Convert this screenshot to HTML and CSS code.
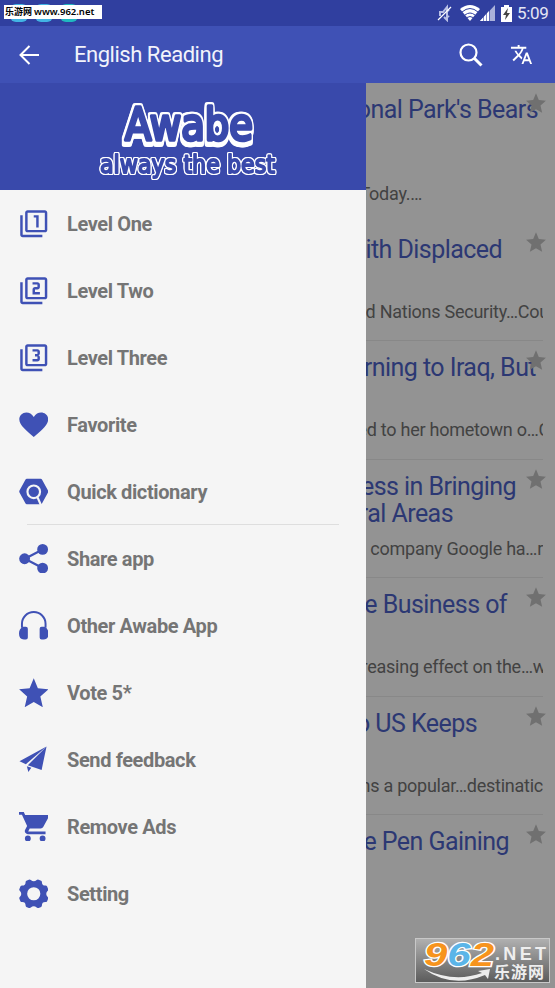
FILE: index.html
```
<!DOCTYPE html>
<html lang="en">
<head>
<meta charset="utf-8">
<title>English Reading</title>
<link rel="stylesheet" href="styles.css">
</head>
<body>
<svg width="0" height="0" class="defs">
  <defs>
    <symbol id="star" viewBox=".6 .8 22.800 21.900" preserveAspectRatio="none"><path d="M12 1l3.2 7.5 8.1.7-6.2 5.3 1.9 8L12 18.700 5 22.500l1.900-8L.7 9.200l8.100-.7z"/></symbol>
    <symbol id="stack" viewBox="0 0 24 24"><path d="M3 5H1v16c0 1.100.9 2 2 2h16v-2H3zM21 1H7c-1.100 0-2 .9-2 2v14c0 1.100.9 2 2 2h14c1.100 0 2-.9 2-2V3c0-1.100-.9-2-2-2zm0 16H7V3h14z"/></symbol>
  </defs>
</svg>
<div class="screen">
  <header class="status">
    <div class="notices"><i></i><i></i><i class="teal"></i></div>
    <span class="site-tag">乐游网 <span>www.962.net</span></span>
    <div class="system">
      <svg class="mute" viewBox="0 0 16 18"><path d="M3 12V8h3l4-5v13l-3-3M11 6l1 1M11 12l1 1" fill="none" stroke="#b9c0e6" stroke-width="2"/><path d="M1 16L14 3" stroke="#fff" stroke-width="1.300"/></svg>
      <svg class="wifi" viewBox="0 0 20 16"><path d="M0 4Q10-4 20 4L10 16z" fill="#fff"/><path d="M2 7Q10 0 18 7M5 10Q10 6 15 10M7 12.500Q10 10.500 13 12.500" fill="none" stroke="#303f9f" stroke-width="1"/></svg>
      <svg class="signal" viewBox="0 0 15 16"><path d="M0 16L15 0V16z" fill="#aab1da"/><path d="M0 16L9 6V16z" fill="#fff"/><path d="M3.500 11v5M6.500 8v8M9.500 5v11" stroke="#303f9f" stroke-width=".6"/></svg>
      <svg class="battery" viewBox="0 0 11 17"><path d="M3 0h5v2h3v15H0V2h3z" fill="#fff"/><path d="M7 3L2 10h3l-1 5 5-7H6z" fill="#454545"/></svg>
      <span class="clock">5:09</span>
    </div>
  </header>
  <nav class="appbar">
    <svg class="back" viewBox="0 0 20 20"><path d="M20 10H1.500M10.500 1L1.500 10l9 9" fill="none" stroke="#fff" stroke-width="2"/></svg>
    <h1>English Reading</h1>
    <svg class="search" viewBox="0 0 24 24"><circle cx="9.500" cy="9.500" r="8" fill="none" stroke="#fff" stroke-width="2.200"/><path d="M15 15l7.500 7.500" stroke="#fff" stroke-width="3"/></svg>
    <svg class="translate" viewBox="0 0 24 24"><path fill="#fff" d="M12.870 15.070l-2.540-2.510.030-.030c1.740-1.940 2.980-4.170 3.710-6.530H17V4h-7V2H8v2H1v1.990h11.170C11.500 7.920 10.440 9.750 9 11.350 8.070 10.320 7.300 9.190 6.690 8h-2c.73 1.630 1.730 3.170 2.980 4.560l-5.090 5.020L4 19l5-5 3.110 3.110zM18.500 10h-2L12 22h2l1.120-3h4.750L21 22h2zm-2.620 7l1.620-4.330L19.120 17z"/></svg>
  </nav>
  <div class="content">
    <aside class="drawer">
      <div class="brand">
        <svg viewBox="0 0 366 107">
          <text class="brand-name" x="125" y="57" textLength="128" lengthAdjust="spacingAndGlyphs">Awabe</text>
          <text class="brand-line" x="100" y="90" textLength="175" lengthAdjust="spacingAndGlyphs">always the best</text>
        </svg>
      </div>
      <ul class="menu">
        <li><svg viewBox="0 0 24 24"><use href="#stack"/><path d="M14 15h2V5h-4v2h2z"/></svg><span>Level One</span></li>
        <li><svg viewBox="0 0 24 24"><use href="#stack"/><path d="M17 13h-4v-2h2c1.100 0 2-.9 2-2V7c0-1.100-.9-2-2-2h-4v2h4v2h-2c-1.100 0-2 .9-2 2v4h6z"/></svg><span>Level Two</span></li>
        <li><svg viewBox="0 0 24 24"><use href="#stack"/><path d="M17 13v-1.500c0-.8-.7-1.500-1.500-1.500.8 0 1.500-.7 1.500-1.500V7c0-1.100-.9-2-2-2h-4v2h4v2h-2v2h2v2h-4v2h4c1.100 0 2-.9 2-2z"/></svg><span>Level Three</span></li>
        <li><svg viewBox="0 0 30 30"><path d="M15 27.500C8 21.500.3 15.500.3 9.500.3 5.500 3.500 2.500 7.500 2.500c3 0 5.500 1.500 7.500 4.500 2-3 4.500-4.500 7.500-4.500 4 0 7.200 3 7.200 7 0 6-7.700 12-14.700 18z"/></svg><span>Favorite</span></li>
        <li><svg viewBox="0 0 30 30"><path d="M8 1.800h14q1 0 1.500 1l6 11q.5 1 0 2l-6 11q-.5 1-1.500 1H8q-1 0-1.500-1l-6-11q-.5-1 0-2l6-11q.5-1 1.500-1z"/><circle cx="15" cy="15" r="6.400" fill="none" stroke="#f5f5f5" stroke-width="2.200"/><path d="M18.500 20l4 9" stroke="#f5f5f5" stroke-width="2.200"/></svg><span>Quick dictionary</span></li>
        <li class="ruled"><svg viewBox="0 0 30 30"><path d="M24 5.500L6 15l18 9.500" fill="none" stroke="#3f51b5" stroke-width="2.300"/><circle cx="24" cy="5.500" r="5.500"/><circle cx="5.700" cy="15" r="5.500"/><circle cx="24" cy="24.500" r="5.500"/></svg><span>Share app</span></li>
        <li><svg viewBox="0 0 30 30"><path d="M3 17v-4a12 12 0 0 1 24 0v4" fill="none" stroke="#3f51b5" stroke-width="2"/><path d="M4 16h3q2 0 2 2v9q0 2-2 2H5q-5 0-5-6 0-5 4-7zM26 16h-3q-2 0-2 2v9q0 2 2 2h2q5 0 5-6 0-5-4-7z"/></svg><span>Other Awabe App</span></li>
        <li><svg viewBox="0 0 24 24"><use href="#star"/></svg><span>Vote 5*</span></li>
        <li><svg viewBox="0 0 30 30"><path d="M28 1.500L.5 16.500 7 19.500zM28 1.500L9 20.500l14 4.800zM8 21.500l4.500 1.700-3 4.300z"/></svg><span>Send feedback</span></li>
        <li><svg viewBox="0 0 24 24"><path d="M7.200 19.200a2.400 2.400 0 1 0 0 4.800 2.400 2.400 0 0 0 0-4.800zM0 0v2.200h2.400l4.200 9.200-1.600 3c-.9 1.600.3 3.600 2.100 3.600h14.500v-2.200H7.500l1.200-2.300h9q1.300 0 2-1.200L24 4.400q.6-2-1-2H5L3.900 0zm19.200 19.200a2.400 2.400 0 1 0 0 4.800 2.400 2.400 0 0 0 0-4.800z"/></svg><span>Remove Ads</span></li>
        <li><svg viewBox="0 0 30 30"><path d="M10 .8q1-.5 2 .2 3 2.500 6 0 1-.7 2-.2l2.500 1q.8.500.8 1.500 0 3.400 3.400 3.400 1.500 0 1.900 1l1 2.500q.4 1-.4 1.800-3 3.200 0 6.200.8.800.4 1.800l-1 2.500q-.4 1-1.900 1-3.400 0-3.400 3.400 0 1-.8 1.500l-2.500 1q-1 .4-2-.4-3-2.500-6 0-1 .8-2 .4l-2.500-1q-.8-.5-.8-1.500 0-3.400-3.400-3.400-1.500 0-1.900-1l-1-2.500q-.4-1 .4-1.800 3-3 0-6.200-.8-.8-.4-1.800l1-2.500q.4-1 1.900-1 3.400 0 3.400-3.400 0-1 .8-1.500zM15 8.300a6.700 6.700 0 1 0 0 13.400 6.700 6.700 0 0 0 0-13.400z"/></svg><span>Setting</span></li>
      </ul>
    </aside>
    <main class="stories">
      <article class="first"><svg><use href="#star"/></svg><h2 class="t1">onal Park's Bears</h2><p class="e1"><span>Today.…</span></p></article>
      <article class="plain"><svg><use href="#star"/></svg><h2 class="t2">ith Displaced</h2><p class="e2"><span>d Nations Security…Cou</span></p></article>
      <article><svg><use href="#star"/></svg><h2 class="t3">rning to Iraq, But</h2><p class="e3"><span>ed to her hometown o…C</span></p></article>
      <article><svg><use href="#star"/></svg><h2 class="t4"><span>ess in Bringing</span><span class="t4b">ral Areas</span></h2><p class="e4"><span>company Google ha…r</span></p></article>
      <article><svg><use href="#star"/></svg><h2 class="t5">e Business of</h2><p class="e5"><span>reasing effect on the…w</span></p></article>
      <article><svg><use href="#star"/></svg><h2 class="t6">o US Keeps</h2><p class="e6"><span>ns a popular…destinatic</span></p></article>
      <article><svg><use href="#star"/></svg><h2 class="t7">e Pen Gaining</h2></article>
    </main>
  </div>
  <div class="watermark">
    <svg viewBox="0 0 133 43">
      <text class="digits" x="8" y="27" textLength="70" lengthAdjust="spacingAndGlyphs"><tspan fill="#f7941d">9</tspan><tspan fill="#5bb5e8">6</tspan><tspan fill="#f7941d">2</tspan></text>
      <path d="M8 30Q38 44 66 34l-4-2 12-2-2 10-3-4Q36 50 8 30z" fill="#eee"/>
      <text class="net" x="79" y="21" textLength="51" lengthAdjust="spacing">.NET</text>
      <text class="cn" x="78" y="39" textLength="50">乐游网</text>
    </svg>
  </div>
</div>
</body>
</html>
```
FILE: styles.css
```
* { box-sizing: border-box; }
body { margin: 0; font-family: Roboto, "Noto Sans CJK SC", sans-serif; }
h1, h2, p, ul { margin: 0; padding: 0; font-weight: 400; }
.defs { position: absolute; }
.screen { position: relative; width: 555px; height: 988px; overflow: hidden; background: #939393; }

.status { position: relative; display: flex; height: 26px; background: #303f9f; align-items: center; justify-content: space-between; }
.notices { display: flex; gap: 7px; padding-left: 10px; }
.notices i { width: 18px; height: 18px; border-radius: 6px; background: #42b4e4; }
.notices .teal { background: #20b8c0; }
.site-tag { position: absolute; left: 4px; top: 5px; width: 98px; height: 14px; padding-left: 1px; background: #fff; color: #000; font: bold 9px/14px "Noto Sans CJK SC", sans-serif; white-space: nowrap; }
.site-tag span { font-family: "Noto Sans", sans-serif; font-size: 9.500px; font-weight: 600; }
.system { display: flex; align-items: center; padding-right: 6px; }
.mute { width: 16px; height: 18px; }
.wifi { width: 20px; height: 16px; margin-left: 7px; }
.signal { width: 15px; height: 16px; }
.battery { width: 11px; height: 17px; margin: 0 5px 0 6px; }
.clock { color: #e4e6f4; font-size: 17px; letter-spacing: -.3px; line-height: 26px; width: 32px; white-space: nowrap; }

.appbar { display: flex; align-items: center; height: 57px; background: #3f51b5; padding-left: 19px; }
.appbar h1 { flex: 1; margin-left: 35px; color: #f2f3fb; font-size: 22px; letter-spacing: -.47px; line-height: 56px; padding-top: 1px; }
.back { width: 20px; height: 20px; }
.search { width: 24px; height: 24px; margin-right: 27px; }
.translate { width: 23px; height: 23px; margin-right: 22px; }

.content { display: flex; height: 905px; }
.drawer { width: 366px; background: #f5f5f5; }
.brand { height: 107px; background: #3949ab; }
.brand svg { display: block; width: 366px; height: 107px; }
.brand text { fill: #3949ab; stroke: #3949ab; stroke-linejoin: round; }
.brand-name { font: 44px "DejaVu Sans", sans-serif; stroke-width: 3.500px; filter: drop-shadow(1.500px 0 0 #fff) drop-shadow(-1.500px 0 0 #fff) drop-shadow(0 1.500px 0 #fff) drop-shadow(0 -1.500px 0 #fff) drop-shadow(0 4px 0 #fff); }
.brand-line { font: 24px "DejaVu Sans", sans-serif; stroke-width: 1.800px; filter: drop-shadow(1px 0 0 #fff) drop-shadow(-1px 0 0 #fff) drop-shadow(0 1px 0 #fff) drop-shadow(0 -1px 0 #fff); }
.menu { list-style: none; }
.menu li { position: relative; display: flex; align-items: center; height: 67px; padding-left: 18.500px; color: #757575; font-size: 20px; letter-spacing: -.38px; font-weight: 700; white-space: nowrap; }
.menu svg { width: 29.500px; height: 29.500px; margin-right: 19px; fill: #3f51b5; }
.menu span { line-height: 24px; }
.ruled::before { content: ""; position: absolute; left: 27px; top: -1px; width: 312px; height: 1px; background: #dedede; }

.stories { width: 177px; }
.stories article { position: relative; height: 118.400px; border-top: 1px solid #888; padding-top: 13px; }
.stories .first { height: 139px; border-top-color: transparent; padding-top: 12px; }
.stories .plain { border-top-color: transparent; }
.stories svg { position: absolute; right: -3px; top: 9px; width: 20px; height: 20px; fill: #707070; }
.stories h2 { display: flex; flex-direction: column; align-items: flex-end; height: 62px; color: #2c3873; font-size: 25px; letter-spacing: -.55px; line-height: 27px; white-space: nowrap; }
.stories .first h2 { height: 84px; }
.stories p { display: flex; overflow: hidden; height: 24px; color: #424242; font-size: 18px; letter-spacing: -.25px; white-space: nowrap; justify-content: flex-end; line-height: 24px; margin-top: 2px; }
.stories { clip-path: inset(0 -12px 0 0); }
.t1 { padding-right: 5px; }
.t2 { padding-right: 41px; }
.t3 { padding-right: 7px; }
.t4 { padding-right: 27px; }
.t4b { margin-right: 63px; }
.t5 { padding-right: 36px; }
.t6 { padding-right: 66px; }
.t7 { padding-right: 34px; }
.e1 { padding-right: 121px; }
.e2 span { margin-right: -6px; }
.e3 span { margin-right: -7px; }
.e5 span { margin-right: -3px; }
.e6 span { margin-right: 0; }

.watermark { position: absolute; left: 415px; top: 938px; width: 135px; height: 45px; border: 1px solid #c8c8c8; background: linear-gradient(#b0b0b0, #5c5c5c); }
.watermark svg { display: block; width: 133px; height: 43px; }
.digits { font: italic bold 33px "Liberation Sans", sans-serif; stroke: #fff; stroke-width: 2.500px; paint-order: stroke; }
.net { font: bold 18px "Liberation Sans", sans-serif; fill: #eee; }
.cn { font: bold 16px "Noto Sans CJK SC", sans-serif; fill: #eee; }
```
